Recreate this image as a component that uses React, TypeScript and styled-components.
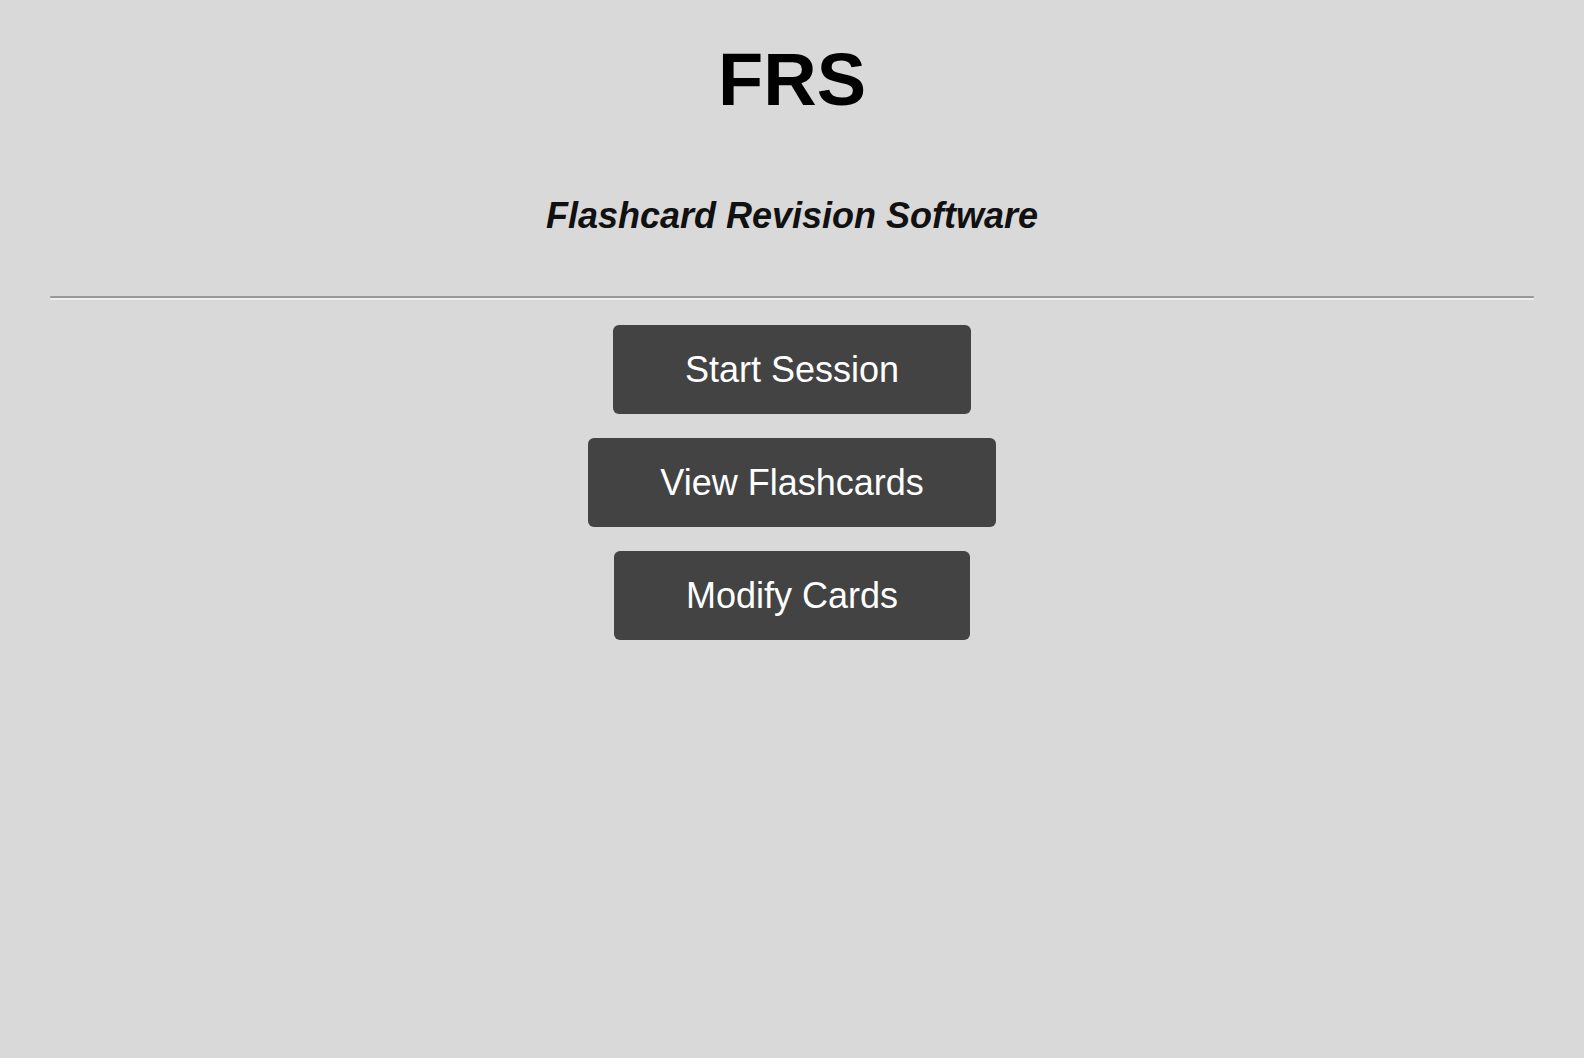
import React from "react";
import styled, { createGlobalStyle } from "styled-components";

const GlobalStyle = createGlobalStyle`
  html, body {
    margin: 0;
    padding: 0;
    background: #d9d9d9;
    font-family: "Liberation Sans", Arial, Helvetica, sans-serif;
  }
`;

const Page = styled.div`
  min-height: 1058px;
  padding: 0 50px;
  box-sizing: border-box;
  display: flex;
  flex-direction: column;
  align-items: center;
`;

const Title = styled.h1`
  margin: 43px 0 0;
  font-size: 74px;
  line-height: 74px;
  font-weight: 700;
  color: #000;
`;

const Subtitle = styled.h2`
  margin: 81px 0 0;
  font-size: 36px;
  line-height: 36px;
  font-weight: 700;
  font-style: italic;
  color: #111;
`;

const Divider = styled.hr`
  align-self: stretch;
  margin: 62px 0 0;
  height: 0;
  border: none;
  border-top: 2px solid #999999;
  border-bottom: 2px solid #eeeeee;
  border-radius: 1px;
`;

const Menu = styled.nav`
  margin-top: 25px;
  display: flex;
  flex-direction: column;
  align-items: center;
  gap: 24px;
`;

const MenuButton = styled.button`
  font-family: "Liberation Sans", Arial, Helvetica, sans-serif;
  font-size: 36px;
  line-height: 41px;
  color: #fff;
  background: #434343;
  border: none;
  border-radius: 6px;
  padding: 24px 72px;
  cursor: pointer;
`;

export default function App() {
  return (
    <>
      <GlobalStyle />
      <Page>
        <Title>FRS</Title>
        <Subtitle>Flashcard Revision Software</Subtitle>
        <Divider />
        <Menu>
          <MenuButton>Start Session</MenuButton>
          <MenuButton>View Flashcards</MenuButton>
          <MenuButton>Modify Cards</MenuButton>
        </Menu>
      </Page>
    </>
  );
}
